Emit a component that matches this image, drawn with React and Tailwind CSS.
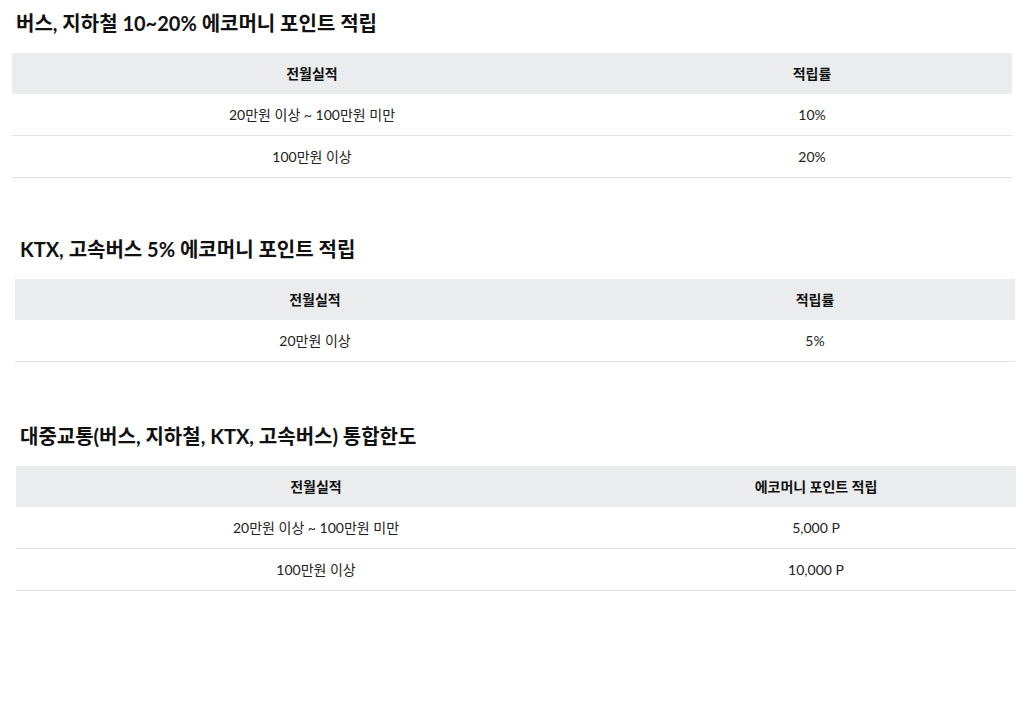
import React from "react";

const font = { fontFamily: 'Lato, "Noto Sans CJK KR", sans-serif' };

function Section({ title, cols, rows, ml, tml, top }) {
  return (
    <section className={`${ml} ${top}`}>
      <h2 className={`${tml} text-[20px] font-bold leading-[26px] text-[#111]`}>{title}</h2>
      <div className="mt-[17px] w-[1000px] text-[14px] text-[#222]">
        <div className="flex h-[41px] items-center bg-[#ebecee] font-bold text-[#111]">
          <div className="w-[600px] text-center">{cols[0]}</div>
          <div className="flex-1 text-center">{cols[1]}</div>
        </div>
        {rows.map((r, i) => (
          <div key={i} className="flex h-[42px] items-center border-b border-[#e3e3e3]">
            <div className="w-[600px] text-center">{r[0]}</div>
            <div className="flex-1 text-center">{r[1]}</div>
          </div>
        ))}
      </div>
    </section>
  );
}

export default function App() {
  return (
    <div className="min-h-[705px] w-[1027px] bg-white" style={font}>
      <Section
        top="pt-[10px]"
        ml="ml-[12px]"
        tml="ml-[4px]"
        title="버스, 지하철 10~20% 에코머니 포인트 적립"
        cols={["전월실적", "적립률"]}
        rows={[
          ["20만원 이상 ~ 100만원 미만", "10%"],
          ["100만원 이상", "20%"],
        ]}
      />
      <Section
        top="pt-[58px]"
        ml="ml-[15px]"
        tml="ml-[5px]"
        title="KTX, 고속버스 5% 에코머니 포인트 적립"
        cols={["전월실적", "적립률"]}
        rows={[["20만원 이상", "5%"]]}
      />
      <Section
        top="pt-[61px]"
        ml="ml-[16px]"
        tml="ml-[4px]"
        title="대중교통(버스, 지하철, KTX, 고속버스) 통합한도"
        cols={["전월실적", "에코머니 포인트 적립"]}
        rows={[
          ["20만원 이상 ~ 100만원 미만", "5,000 P"],
          ["100만원 이상", "10,000 P"],
        ]}
      />
    </div>
  );
}
